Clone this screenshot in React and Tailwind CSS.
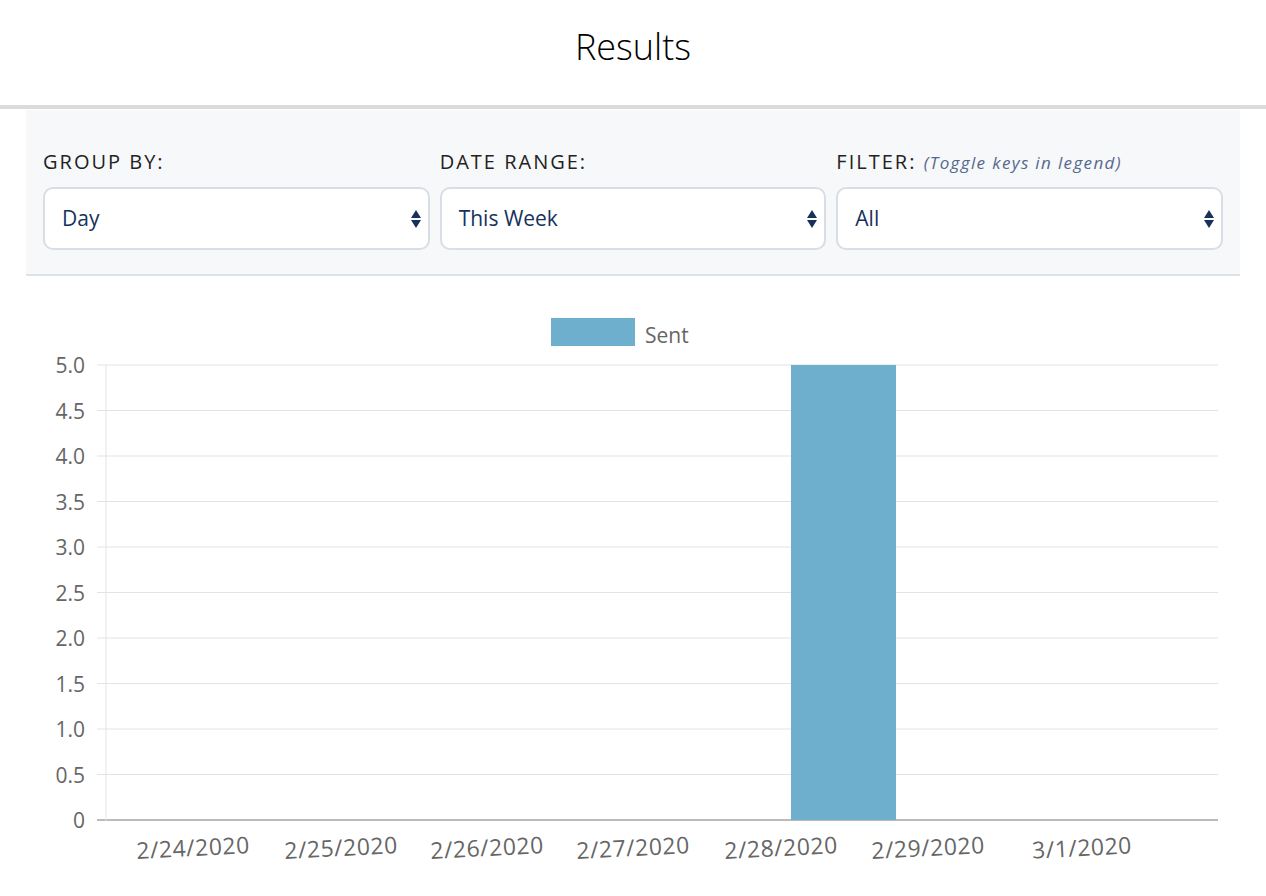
const TICKS = ["5.0", "4.5", "4.0", "3.5", "3.0", "2.5", "2.0", "1.5", "1.0", "0.5", "0"];
const DATES = [
  ["2/24/2020", 193],
  ["2/25/2020", 341],
  ["2/26/2020", 487],
  ["2/27/2020", 633],
  ["2/28/2020", 781],
  ["2/29/2020", 928],
  ["3/1/2020", 1082],
];

function Select({ value }) {
  return (
    <div className="w-full h-[63px] shrink-0 bg-white border-2 border-[#d8dde6] rounded-[10px] flex items-center justify-between pl-[17px] pr-[6px]">
      <span className="text-[21px] text-[#16325c]">{value}</span>
      <svg width="12" height="24" viewBox="0 0 12 24">
        <path d="M6 3 L11 11 H1 Z" fill="#16325c" />
        <path d="M6 21 L11 13 H1 Z" fill="#16325c" />
      </svg>
    </div>
  );
}

function Chart() {
  const top = 365;
  const step = 45.5;
  return (
    <svg width="1266" height="610" viewBox="0 276 1266 610" className="block" style={{ fontFamily: "'Open Sans', sans-serif" }}>
      <rect x="551" y="318" width="84" height="28" fill="#6eafcd" />
      <text x="645" y="343" fontSize="21" fill="#666">Sent</text>
      {TICKS.map((t, i) => {
        const y = top + i * step;
        return (
          <g key={t}>
            <line x1="97" x2="1218" y1={y} y2={y} stroke={i === 10 ? "#bbb" : "#e3e3e3"} strokeWidth={i === 10 ? 2 : 1} />
            <text x="85" y={y + 8} fontSize="21" fill="#666" textAnchor="end">{t}</text>
          </g>
        );
      })}
      <line x1="106" x2="106" y1={top} y2="821" stroke="#e3e3e3" />
      <rect x="791" y={top} width="105" height={820 - top} fill="#6eafcd" />
      {DATES.map(([d, x]) => (
        <text key={d} x={x} y="856" fontSize="23" letterSpacing="0.5" fill="#666" textAnchor="middle" transform={`rotate(-3 ${x} 848)`}>{d}</text>
      ))}
    </svg>
  );
}

export default function App() {
  return (
    <div className="w-[1266px] h-[896px] bg-white overflow-hidden" style={{ fontFamily: "'Open Sans', sans-serif" }}>
      <div className="h-[109px] flex items-center justify-center border-b-4 border-[#dddbda]">
        <h1 className="text-[36px] font-light text-black mt-[-12px]">Results</h1>
      </div>
      <div className="mx-[26px] mt-[1px] h-[166px] bg-[#f7f8fa] border-b-2 border-[#dde1e8] flex gap-[10px] px-[17px] pt-[37px]">
        <div className="flex-1 flex flex-col">
          <div className="text-[20px] tracking-[0.1em] text-[#222] h-[40px]">GROUP BY:</div>
          <Select value="Day" />
        </div>
        <div className="flex-1 flex flex-col">
          <div className="text-[20px] tracking-[0.1em] text-[#222] h-[40px]">DATE RANGE:</div>
          <Select value="This Week" />
        </div>
        <div className="flex-1 flex flex-col">
          <div className="text-[20px] tracking-[0.1em] text-[#222] h-[40px] whitespace-nowrap">
            FILTER: <span className="italic text-[17px] tracking-[0.08em] text-[#54698d]">(Toggle keys in legend)</span>
          </div>
          <Select value="All" />
        </div>
      </div>
      <Chart />
    </div>
  );
}
